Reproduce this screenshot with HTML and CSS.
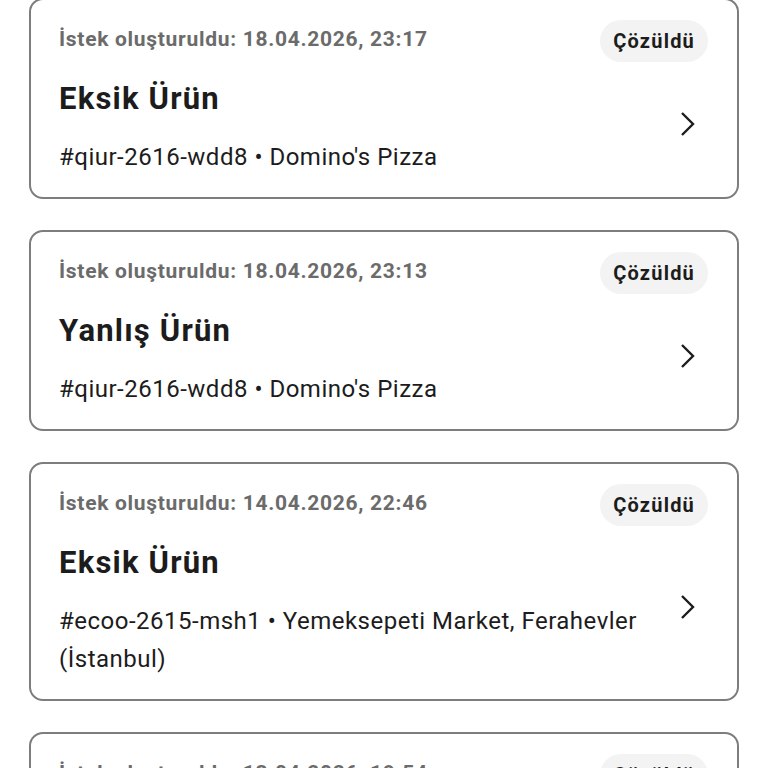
FILE: index.html
```html
<!DOCTYPE html>
<html lang="tr">
<head>
    <meta charset="UTF-8">
    <meta name="viewport" content="width=device-width, initial-scale=1.0">
    <title>Destek Talepleri</title>
    <link rel="stylesheet" href="styles.css">
</head>
<body>
    <div class="request-list">
        <div class="request-card">
            <div class="request-head">
                <div class="request-date">İstek oluşturuldu: 18.04.2026, 23:17</div>
                <div class="status-badge">Çözüldü</div>
            </div>
            <div class="request-body">
                <div class="request-info">
                    <div class="request-title">Eksik Ürün</div>
                    <div class="request-meta">#qiur-2616-wdd8 • Domino's Pizza</div>
                </div>
                <svg class="chevron" viewBox="0 0 16 26" fill="none" stroke="currentColor" stroke-width="2.4"><path d="M2 2 L13 13 L2 24"/></svg>
            </div>
        </div>

        <div class="request-card">
            <div class="request-head">
                <div class="request-date">İstek oluşturuldu: 18.04.2026, 23:13</div>
                <div class="status-badge">Çözüldü</div>
            </div>
            <div class="request-body">
                <div class="request-info">
                    <div class="request-title">Yanlış Ürün</div>
                    <div class="request-meta">#qiur-2616-wdd8 • Domino's Pizza</div>
                </div>
                <svg class="chevron" viewBox="0 0 16 26" fill="none" stroke="currentColor" stroke-width="2.4"><path d="M2 2 L13 13 L2 24"/></svg>
            </div>
        </div>

        <div class="request-card">
            <div class="request-head">
                <div class="request-date">İstek oluşturuldu: 14.04.2026, 22:46</div>
                <div class="status-badge">Çözüldü</div>
            </div>
            <div class="request-body">
                <div class="request-info">
                    <div class="request-title">Eksik Ürün</div>
                    <div class="request-meta">#ecoo-2615-msh1 • Yemeksepeti Market, Ferahevler (İstanbul)</div>
                </div>
                <svg class="chevron" viewBox="0 0 16 26" fill="none" stroke="currentColor" stroke-width="2.4"><path d="M2 2 L13 13 L2 24"/></svg>
            </div>
        </div>

        <div class="request-card">
            <div class="request-head">
                <div class="request-date">İstek oluşturuldu: 13.04.2026, 19:54</div>
                <div class="status-badge">Çözüldü</div>
            </div>
            <div class="request-body">
                <div class="request-info">
                    <div class="request-title">Eksik Ürün</div>
                    <div class="request-meta">#ecoo-2615-msh1 • Yemeksepeti Market</div>
                </div>
                <svg class="chevron" viewBox="0 0 16 26" fill="none" stroke="currentColor" stroke-width="2.4"><path d="M2 2 L13 13 L2 24"/></svg>
            </div>
        </div>
    </div>
</body>
</html>
```

FILE: styles.css
```css
* {
    margin: 0;
    padding: 0;
    box-sizing: border-box;
}

body {
    font-family: Roboto, 'Noto Sans', sans-serif;
    color: #1c1c1c;
    background: #ffffff;
    overflow: hidden;
}

.request-list {
    display: flex;
    flex-direction: column;
    gap: 31px;
    padding: 0 29px;
    margin-top: -2px;
}

.request-card {
    border: 2px solid #7d7d7d;
    border-radius: 14px;
    padding: 19px 29px 21px 28px;
    background: #fff;
}

.request-head {
    display: flex;
    align-items: center;
    justify-content: space-between;
    height: 40px;
}

.request-date {
    font-size: 21px;
    font-weight: 700;
    letter-spacing: 0.7px;
    color: #6b6b6b;
}

.status-badge {
    background: #f3f3f3;
    border-radius: 21px;
    padding: 0 13px;
    height: 42px;
    line-height: 42px;
    font-size: 20px;
    font-weight: 700;
    letter-spacing: 1.2px;
    color: #1c1c1c;
    margin-top: 3px;
}

.request-body {
    display: flex;
    align-items: center;
    gap: 28px;
    margin-top: 20px;
}

.request-info {
    flex: 1;
}

.request-title {
    font-size: 31px;
    font-weight: 700;
    letter-spacing: 1.2px;
    line-height: 40px;
    margin-bottom: 19px;
}

.request-meta {
    font-size: 24px;
    letter-spacing: 0.5px;
    line-height: 38px;
    color: #1c1c1c;
}

.chevron {
    width: 16px;
    height: 26px;
    flex-shrink: 0;
    margin: 0 12px 8px 0;
    color: #1c1c1c;
}
```
